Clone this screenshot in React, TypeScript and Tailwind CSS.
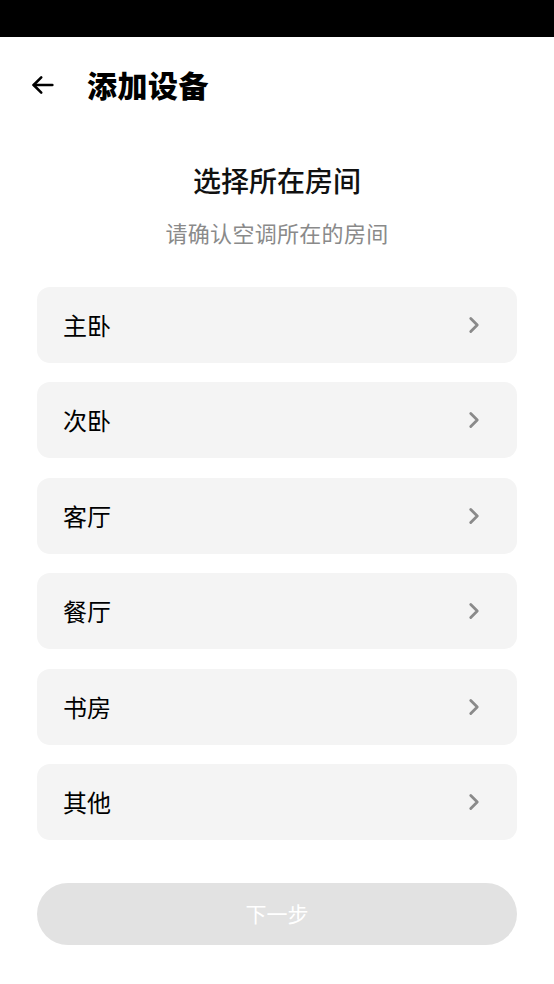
import { ChevronRight } from 'lucide-react';

const rooms = ['主卧', '次卧', '客厅', '餐厅', '书房', '其他'];

const font = { fontFamily: '"Noto Sans CJK SC", "Noto Sans", sans-serif' };

function BackArrow() {
    return (
        <svg width="28" height="28" viewBox="0 0 24 24" fill="none" stroke="#000" strokeWidth="2.2" strokeLinecap="round" strokeLinejoin="round">
            <path d="M20 12H4" />
            <path d="M10.5 5.5L4 12l6.5 6.5" />
        </svg>
    );
}

export default function App() {
    return (
        <div className="w-[554px] h-[984px] bg-white flex flex-col" style={font}>
            {/* status bar */}
            <div className="h-[37px] bg-black shrink-0" />

            {/* header */}
            <div className="h-[96px] flex items-center pl-[29px] shrink-0">
                <BackArrow />
                <h1 className="ml-[30px] -mt-[3px] text-[30px] font-black text-black leading-none tracking-[0.5px]">添加设备</h1>
            </div>

            <div className="flex flex-col items-center mt-[33px]">
                <h2 className="text-[28px] font-medium text-[#111] leading-none">选择所在房间</h2>
                <p className="mt-[27px] text-[22px] text-[#8a8a8a] leading-none tracking-[0.3px]">请确认空调所在的房间</p>
            </div>

            <div className="flex flex-col gap-[19.4px] px-[37px] mt-[44px]">
                {rooms.map(room => (
                    <div key={room} className="h-[76px] rounded-[13px] bg-[#f4f4f4] flex items-center justify-between pl-[26px] pr-[30px]">
                        <span className="text-[24px] text-black leading-none">{room}</span>
                        <ChevronRight size={26} strokeWidth={2.6} color="#8a8a8a" />
                    </div>
                ))}
            </div>

            <div className="px-[37px] mt-[43px]">
                <button className="w-full h-[62px] rounded-full bg-[#e2e2e2] text-white text-[21px]">下一步</button>
            </div>
        </div>
    );
}
